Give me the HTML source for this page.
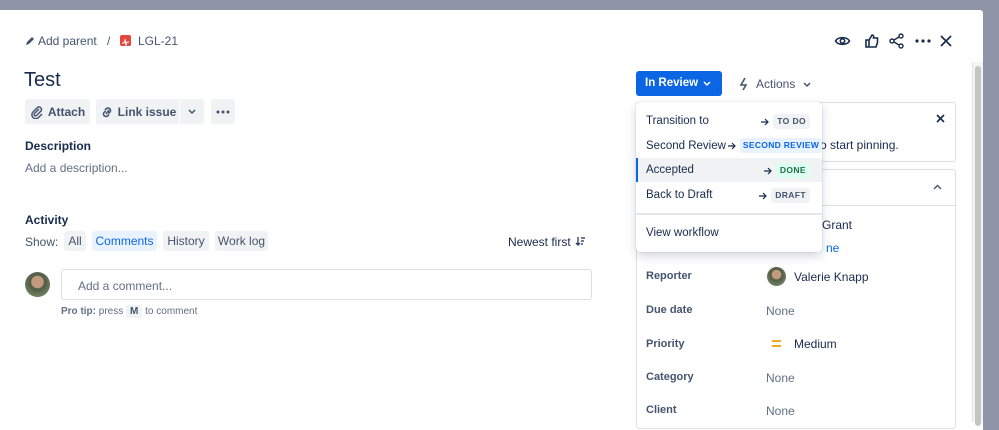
<!DOCTYPE html>
<html><head><meta charset="utf-8"><style>
*{box-sizing:border-box;margin:0;padding:0}
body{width:999px;height:413px;overflow:hidden;background:#8f95a7;font-family:"Liberation Sans",sans-serif;color:#172b4d;position:relative}
.modal{position:absolute;left:0;top:10px;width:983px;height:420px;background:#fff;border-radius:0 3px 0 0}
.a{position:absolute;white-space:nowrap}
.btn{position:absolute;background:#f1f2f4;border-radius:3px;height:25px;font-size:12px;color:#44546f;display:flex;align-items:center;justify-content:center;white-space:nowrap}
.pill{position:absolute;top:231px;height:20px;background:#f1f2f4;border-radius:3px;font-size:12px;color:#44546f;line-height:20px;text-align:center}
.lbl{position:absolute;left:646px;font-size:11px;font-weight:bold;color:#44546f}
.val{position:absolute;font-size:12px;color:#626f86}
.row{position:absolute;right:12px;display:flex;align-items:center;gap:3px}
.lz{font-size:8.5px;font-weight:bold;letter-spacing:.4px;padding:2px 4px;border-radius:3px;line-height:11px}
.it{position:absolute;left:10px;font-size:11.5px;color:#172b4d}
</style></head><body>
<div class="modal"></div>
<div class="a" style="left:972px;top:62px;width:11px;height:360px;background:#f4f4f4;border-left:1px solid #e4e4e4"></div>
<div class="a" style="left:975px;top:66px;width:6px;height:360px;background:#c4c4c4;border-radius:3px"></div>

<svg class="a" style="left:25px;top:36px" width="10" height="10" viewBox="0 0 10 10"><path d="M1 9l1-3 5-5 2 2-5 5z" fill="#44546f"/></svg>
<div class="a" style="left:38px;top:34px;font-size:12px;color:#44546f">Add parent</div>
<div class="a" style="left:107px;top:34px;font-size:12px;color:#44546f">/</div>
<div class="a" style="left:120px;top:35px;width:11px;height:11px;background:#e2483d;border-radius:2px"><svg width="11" height="11"><path d="M2 6h2l1-3 1 5 1-3h2" stroke="#fff" fill="none" stroke-width="1"/></svg></div>
<div class="a" style="left:138px;top:34px;font-size:12px;color:#44546f">LGL-21</div>

<svg class="a" style="left:834px;top:33px" width="17" height="16" viewBox="0 0 17 16"><path d="M1.5 8C4 3.5 13 3.5 15.5 8 13 12.5 4 12.5 1.5 8z" fill="none" stroke="#172b4d" stroke-width="1.6"/><circle cx="8.5" cy="8" r="2.2" fill="none" stroke="#172b4d" stroke-width="1.6"/></svg>
<svg class="a" style="left:864px;top:33px" width="16" height="16" viewBox="0 0 16 16"><path d="M2 7h3v7H2zM5 7l3-5c1.5 0 2 1 1.5 3H13.5v4.5L12 14H5" fill="none" stroke="#172b4d" stroke-width="1.6"/></svg>
<svg class="a" style="left:889px;top:33px" width="16" height="16" viewBox="0 0 16 16"><circle cx="12" cy="3" r="2" fill="none" stroke="#172b4d" stroke-width="1.4"/><circle cx="3" cy="8" r="2" fill="none" stroke="#172b4d" stroke-width="1.4"/><circle cx="12" cy="13" r="2" fill="none" stroke="#172b4d" stroke-width="1.4"/><path d="M5 7l5-3M5 9l5 3" stroke="#172b4d" stroke-width="1.4"/></svg>
<svg class="a" style="left:915px;top:39px" width="16" height="4"><circle cx="2" cy="2" r="1.6" fill="#172b4d"/><circle cx="8" cy="2" r="1.6" fill="#172b4d"/><circle cx="14" cy="2" r="1.6" fill="#172b4d"/></svg>
<svg class="a" style="left:939px;top:34px" width="14" height="14"><path d="M2 2l10 10M12 2L2 12" stroke="#172b4d" stroke-width="1.7"/></svg>

<div class="a" style="left:24px;top:69px;font-size:20px;color:#172b4d">Test</div>
<div class="btn" style="left:25px;top:99px;width:65px"><svg width="14" height="14" style="margin-right:4px" viewBox="0 0 14 14"><path d="M9 4L4.5 8.5a1.3 1.3 0 002 2L11 6a2.5 2.5 0 00-3.5-3.5L3 7a3.8 3.8 0 005.5 5.5L12 9" fill="none" stroke="#44546f" stroke-width="1.5"/></svg><b style="font-weight:600">Attach</b></div>
<div class="btn" style="left:96px;top:99px;width:83px;border-radius:3px 0 0 3px"><svg width="16" height="14" style="margin-right:3px" viewBox="0 0 16 14"><path d="M7 9l3-4M6 5l1.5-1.5a2.5 2.5 0 013.5 3.5L9.5 8.5M10 9.5L8.5 11a2.5 2.5 0 01-3.5-3.5L6.5 6" fill="none" stroke="#44546f" stroke-width="1.6"/></svg><b style="font-weight:600">Link issue</b></div>
<div class="btn" style="left:180px;top:99px;width:24px;border-radius:0 3px 3px 0"><svg width="8" height="6"><path d="M1 1l3 3 3-3" fill="none" stroke="#44546f" stroke-width="1.5"/></svg></div>
<div class="btn" style="left:211px;top:99px;width:24px"><svg width="14" height="4"><circle cx="2" cy="2" r="1.5" fill="#44546f"/><circle cx="7" cy="2" r="1.5" fill="#44546f"/><circle cx="12" cy="2" r="1.5" fill="#44546f"/></svg></div>

<div class="a" style="left:25px;top:139px;font-size:12px;font-weight:bold;color:#172b4d">Description</div>
<div class="a" style="left:25px;top:161px;font-size:12px;color:#626f86">Add a description...</div>
<div class="a" style="left:25px;top:213px;font-size:12px;font-weight:bold;color:#172b4d">Activity</div>
<div class="a" style="left:25px;top:235px;font-size:12px;color:#44546f">Show:</div>
<div class="pill" style="left:64px;width:22px">All</div>
<div class="pill" style="left:92px;width:65px;background:#e9f2ff;color:#0c66e4">Comments</div>
<div class="pill" style="left:163px;width:46px">History</div>
<div class="pill" style="left:215px;width:53px">Work log</div>
<div class="a" style="left:508px;top:235px;font-size:12px;color:#172b4d">Newest first</div>
<svg class="a" style="left:575px;top:236px" width="11" height="11"><path d="M3 1v8M1 7l2 2 2-2M6 2h4M6 5h3M6 8h2" stroke="#172b4d" stroke-width="1.2" fill="none"/></svg>
<div class="a" style="left:25px;top:272px;width:25px;height:25px;border-radius:50%;background:radial-gradient(circle at 50% 40%,#c49a7e 0 30%,#4e5a46 35%,#6d7d5d 70%,#3b4250)"></div>
<div class="a" style="left:61px;top:269px;width:531px;height:31px;border:1px solid #dcdfe4;border-radius:3px;font-size:12px;color:#626f86;padding:9px 16px">Add a comment...</div>
<div class="a" style="left:61px;top:306px;font-size:10px;color:#626f86"><b>Pro tip:</b> press <span style="background:#f1f2f4;padding:1px 4px;font-weight:bold;color:#44546f">M</span> to comment</div>

<div class="a" style="left:636px;top:71px;width:86px;height:25px;background:#0c66e4;border-radius:3px;color:#fff;font-size:11.5px;font-weight:bold;padding:6px 9px">In Review</div>
<svg class="a" style="left:703px;top:81px" width="8" height="6"><path d="M1 1l3 3 3-3" fill="none" stroke="#fff" stroke-width="1.5"/></svg>
<svg class="a" style="left:739px;top:77px" width="10" height="14" viewBox="0 0 10 14"><path d="M6 1L2 8h5l-3 5" fill="none" stroke="#44546f" stroke-width="1.6"/></svg>
<div class="a" style="left:756px;top:77px;font-size:12px;color:#44546f">Actions <svg width="8" height="6" style="margin-left:4px"><path d="M1 1l3 3 3-3" fill="none" stroke="#44546f" stroke-width="1.5"/></svg></div>

<div class="a" style="left:636px;top:102px;width:320px;height:60px;border:1px solid #dcdfe4;border-radius:3px"></div>
<svg class="a" style="left:936px;top:114px" width="9" height="9"><path d="M1 1l7 7M8 1L1 8" stroke="#172b4d" stroke-width="1.6"/></svg>
<div class="a" style="left:820px;top:138px;font-size:12px;color:#172b4d">o start pinning.</div>
<div class="a" style="left:636px;top:169px;width:320px;height:260px;border:1px solid #dcdfe4;border-radius:3px"></div>
<div class="a" style="left:636px;top:205px;width:320px;height:1px;background:#dcdfe4"></div>
<svg class="a" style="left:933px;top:184px" width="9" height="6"><path d="M1 5l3.5-3.5L8 5" fill="none" stroke="#44546f" stroke-width="1.4"/></svg>
<div class="a" style="left:822px;top:218px;font-size:12px;color:#172b4d">Grant</div>
<div class="a" style="left:826px;top:241px;font-size:12px;color:#0c66e4">ne</div>
<div class="lbl" style="top:270px">Reporter</div>
<div class="a" style="left:767px;top:267px;width:19px;height:19px;border-radius:50%;background:radial-gradient(circle at 50% 40%,#c49a7e 0 30%,#4e5a46 35%,#6d7d5d 70%,#3b4250)"></div>
<div class="a" style="left:794px;top:270px;font-size:12px;color:#172b4d">Valerie Knapp</div>
<div class="lbl" style="top:304px">Due date</div><div class="val" style="left:766px;top:304px">None</div>
<div class="lbl" style="top:338px">Priority</div>
<div class="a" style="left:772px;top:340px;width:9px;height:2px;background:#f5a623"></div>
<div class="a" style="left:772px;top:345px;width:9px;height:2px;background:#f5a623"></div>
<div class="a" style="left:794px;top:337px;font-size:12px;color:#172b4d">Medium</div>
<div class="lbl" style="top:371px">Category</div><div class="val" style="left:766px;top:371px">None</div>
<div class="lbl" style="top:404px">Client</div><div class="val" style="left:766px;top:404px">None</div>

<div class="a" style="left:636px;top:102px;width:186px;height:150px;background:#fff;border-radius:4px;box-shadow:0 4px 10px rgba(9,30,66,.18),0 0 1px rgba(9,30,66,.3)">
 <div class="it" style="top:13px">Transition to</div>
 <div class="row" style="top:12px"><svg width="9" height="8"><path d="M0 4h7M4 1l3 3-3 3" fill="none" stroke="#172b4d" stroke-width="1.2"/></svg><span class="lz" style="background:#f1f2f4;color:#44546f">TO DO</span></div>
 <div class="a" style="left:10px;top:36px;display:flex;align-items:center;gap:1px;font-size:11.5px;color:#172b4d">Second Review<svg width="9" height="8" style="margin:0 2px 0 1px"><path d="M0 4h7M4 1l3 3-3 3" fill="none" stroke="#172b4d" stroke-width="1.2"/></svg><span class="lz" style="background:#e9f2ff;color:#0c66e4;letter-spacing:.3px;padding:2px 3px">SECOND REVIEW</span></div>
 <div class="a" style="left:0;top:56px;width:186px;height:24px;background:#f1f2f4;border-left:2px solid #0c66e4"></div>
 <div class="it" style="top:62px">Accepted</div>
 <div class="row" style="top:61px"><svg width="9" height="8"><path d="M0 4h7M4 1l3 3-3 3" fill="none" stroke="#172b4d" stroke-width="1.2"/></svg><span class="lz" style="background:#dcfff1;color:#216e4e">DONE</span></div>
 <div class="it" style="top:87px">Back to Draft</div>
 <div class="row" style="top:86px"><svg width="9" height="8"><path d="M0 4h7M4 1l3 3-3 3" fill="none" stroke="#172b4d" stroke-width="1.2"/></svg><span class="lz" style="background:#f1f2f4;color:#44546f">DRAFT</span></div>
 <div class="a" style="left:0;top:111px;width:186px;height:2px;background:#e4e6ea"></div>
 <div class="it" style="top:125px">View workflow</div>
</div>
</body></html>
